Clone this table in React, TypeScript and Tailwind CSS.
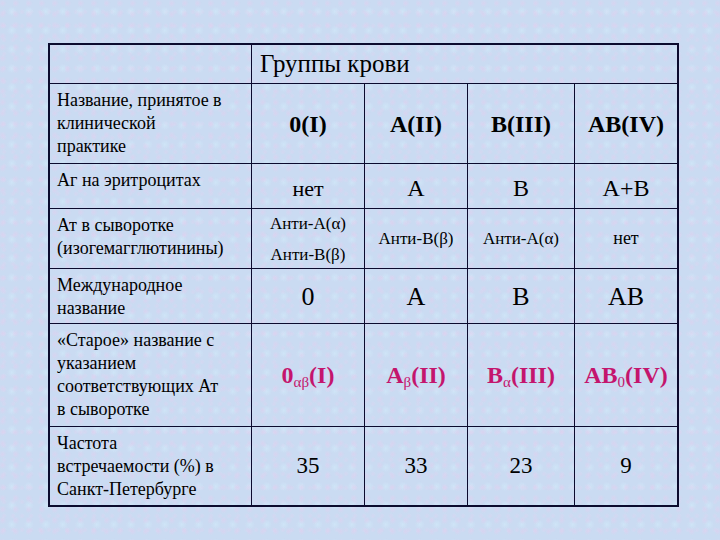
import React from 'react';

// Cyrillic is missing from Liberation Serif here, so it falls back to Noto Serif
const family = ['"Liberation Serif"', '"Noto Serif"', '"DejaVu Serif"', 'serif'].join(', ');

function T({ children }: { children: React.ReactNode }) {
  return (
    <span
      className="font-[family-name:Liberation_Serif,Noto_Serif,DejaVu_Serif,serif]"
      style={{ fontFamily: `${family}` }}
    >
      {children}
    </span>
  );
}

function Label({ children, bottom = true }: { children: React.ReactNode; bottom?: boolean }) {
  return (
    <div
      className={`border-r border-[#0b0b2e] ${bottom ? 'border-b' : ''} pl-[7px] pr-1 pt-[5px] text-[18px] leading-[23px] text-black font-[family-name:Liberation_Serif,Noto_Serif,DejaVu_Serif,serif]`}
    >
      <T>{children}</T>
    </div>
  );
}

function Cell({
  children,
  last,
  bottom = true,
  className = '',
}: {
  children?: React.ReactNode;
  last?: boolean;
  bottom?: boolean;
  className?: string;
}) {
  return (
    <div
      className={`flex items-center justify-center text-center text-black border-[#0b0b2e] font-[family-name:Liberation_Serif,Noto_Serif,DejaVu_Serif,serif] ${last ? '' : 'border-r'} ${bottom ? 'border-b' : ''} ${className}`}
    >
      <T>{children}</T>
    </div>
  );
}

function Old({ base, sub, roman }: { base: string; sub: string; roman: string }) {
  return (
    <span className="font-bold text-[24px] text-[#c4156d]">
      <T>{base}</T>
      <sub className="text-[15px] font-normal">
        <T>{sub}</T>
      </sub>
      <T>{roman}</T>
    </span>
  );
}

export default function App() {
  return (
    <div className="w-full h-[540px] overflow-hidden bg-[#cadbf2] bg-[radial-gradient(circle_at_20%_30%,rgba(232,204,238,0.45)_0,transparent_4px),radial-gradient(circle_at_70%_60%,rgba(210,236,250,0.55)_0,transparent_5px),radial-gradient(circle_at_45%_85%,rgba(228,210,240,0.4)_0,transparent_3px)] bg-[length:13px_11px,17px_19px,9px_14px] pt-[43px] pl-[48px]">
      <div className="w-[631px] h-[464px] border-2 border-[#0b0b2e] grid grid-cols-[202px_113px_103px_107px_1fr] grid-rows-[39px_80px_45px_60px_55px_103px_1fr]">
        {/* header */}
        <div className="border-r border-b border-[#0b0b2e]" />
        <div className="col-span-4 border-b border-[#0b0b2e] pl-[8px] flex items-center text-[25px] text-black">
          <T>Группы крови</T>
        </div>

        {/* row 1 */}
        <Label>
          Название, принятое в<br />клинической<br />практике
        </Label>
        <Cell className="font-bold text-[24px]">0(I)</Cell>
        <Cell className="font-bold text-[24px]">A(II)</Cell>
        <Cell className="font-bold text-[24px]">B(III)</Cell>
        <Cell last className="font-bold text-[24px]">AB(IV)</Cell>

        {/* row 2 */}
        <Label>Аг на эритроцитах</Label>
        <Cell className="text-[22px] pt-[4px]">нет</Cell>
        <Cell className="text-[24px] pt-[4px]">A</Cell>
        <Cell className="text-[24px] pt-[4px]">B</Cell>
        <Cell last className="text-[24px] pt-[4px]">A+B</Cell>

        {/* row 3 */}
        <Label>
          Ат в сыворотке<br />(изогемагглютинины)
        </Label>
        <Cell className="text-[17px] leading-[31px]">
          Анти-А(α)
          <br />
          Анти-В(β)
        </Cell>
        <Cell className="text-[17px]">Анти-В(β)</Cell>
        <Cell className="text-[17px]">Анти-А(α)</Cell>
        <Cell last className="text-[18px]">нет</Cell>

        {/* row 4 */}
        <Label>
          Международное<br />название
        </Label>
        <Cell className="text-[26px]">0</Cell>
        <Cell className="text-[26px]">A</Cell>
        <Cell className="text-[26px]">B</Cell>
        <Cell last className="text-[26px]">AB</Cell>

        {/* row 5 */}
        <Label>
          «Старое» название с<br />указанием<br />соответствующих Ат<br />в сыворотке
        </Label>
        <Cell>
          <Old base="0" sub="αβ" roman="(I)" />
        </Cell>
        <Cell>
          <Old base="A" sub="β" roman="(II)" />
        </Cell>
        <Cell>
          <Old base="B" sub="α" roman="(III)" />
        </Cell>
        <Cell last>
          <Old base="AB" sub="0" roman="(IV)" />
        </Cell>

        {/* row 6 */}
        <Label bottom={false}>
          Частота<br />встречаемости (%) в<br />Санкт-Петербурге
        </Label>
        <Cell bottom={false} className="text-[23px]">35</Cell>
        <Cell bottom={false} className="text-[23px]">33</Cell>
        <Cell bottom={false} className="text-[23px]">23</Cell>
        <Cell bottom={false} last className="text-[23px]">9</Cell>
      </div>
    </div>
  );
}
